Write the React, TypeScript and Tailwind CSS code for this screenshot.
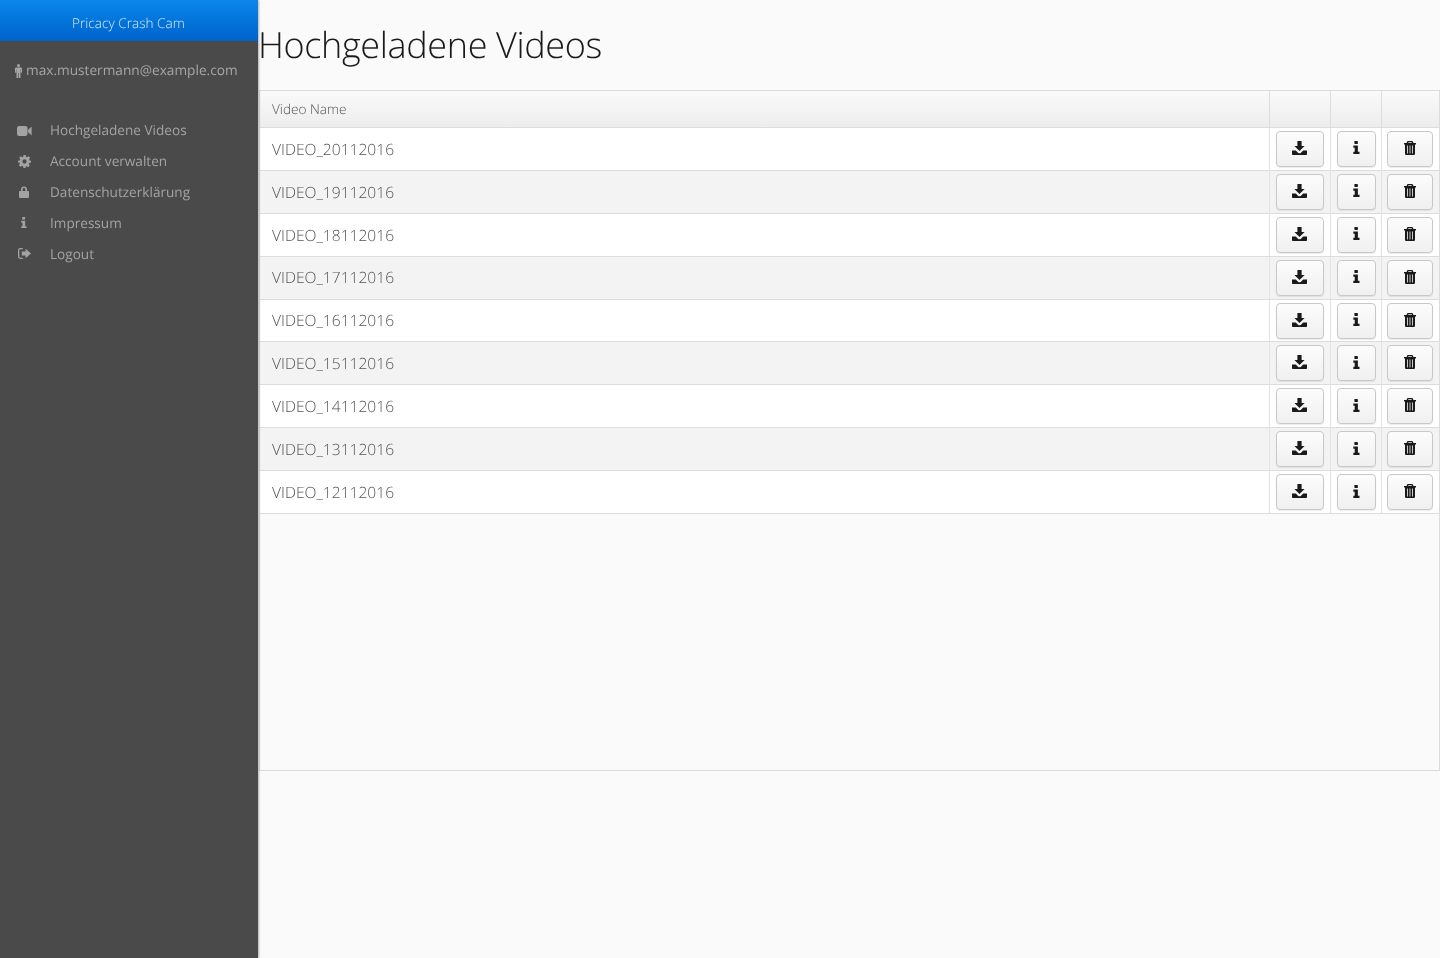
import React from "react";

const font = { fontFamily: '"Open Sans", sans-serif' };
const soft = "will-change-transform [text-rendering:geometricPrecision]";

const VideoIcon = () => (
  <svg width="15" height="12" viewBox="0 0 15 12" fill="currentColor"><rect x="0" y="1" width="10.5" height="10" rx="2.2" /><path d="M11 5 L14.6 1.6 V10.4 L11 7 Z" /></svg>
);
const GearIcon = () => (
  <svg width="13" height="13" viewBox="0 0 24 24" fill="currentColor"><path fillRule="evenodd" d="M10 0h4l.7 3.300 2 .8L19.600 2.300l2.800 2.800-1.800 2.900.8 2L24 10.700v3.300l-3.300.7-.8 2 1.800 2.900-2.800 2.800-2.900-1.800-2 .8L14 24h-4l-.7-3.300-2-.8-2.900 1.800-2.800-2.800 1.800-2.900-.8-2L0 14v-3.300l3.300-.7.8-2L2.300 5.100l2.800-2.800 2.900 1.800 2-.8zM12 8a4 4 0 100 8 4 4 0 000-8z" /></svg>
);
const LockIcon = () => (
  <svg width="10" height="12" viewBox="0 0 10 12" fill="currentColor"><path fillRule="evenodd" d="M2 5V3.400a3 3 0 016 0V5h1.200c.4 0 .8.300.8.800v5.400c0 .4-.4.800-.8.800H.8c-.4 0-.8-.4-.8-.8V5.800C0 5.300.4 5 .8 5zM3.600 5h2.800V3.400a1.400 1.400 0 00-2.800 0z" /></svg>
);
const InfoIcon = ({ size = 12 }: { size?: number }) => (
  <svg width={size * 0.5} height={size} viewBox="0 0 6 12" fill="currentColor"><rect x="1.300" y="0" width="3.200" height="2.800" rx=".4" /><path d="M.3 4.200h4.200V10H6v2H.3v-2h1.300V6.200H.3z" /></svg>
);
const LogoutIcon = () => (
  <svg width="13" height="11" viewBox="0 0 13 11" fill="currentColor"><path d="M4.800 0H2.400A2.400 2.400 0 000 2.400v6.200A2.400 2.400 0 002.400 11h2.400V9.700H2.500a1.200 1.200 0 01-1.200-1.200V2.500c0-.7.500-1.200 1.200-1.200h2.300z" /><path d="M7.600.8 13 5.500 7.600 10.200V7.400H3.800V3.600h3.800z" /></svg>
);
const MaleIcon = () => (
  <svg width="7" height="14" viewBox="0 0 7 14" fill="currentColor"><circle cx="3.500" cy="1.500" r="1.500" /><path d="M1.200 3.400h4.600c.7 0 1.200.5 1.200 1.200v3.600c0 .8-1.200.8-1.200 0V5.200h-.3V14H3.800V9h-.6v5H1.500V5.200h-.3v3c0 .8-1.200.8-1.200 0V4.600c0-.7.500-1.200 1.200-1.200z" /></svg>
);
const DownloadIcon = () => (
  <svg width="15" height="14" viewBox="0 0 15 14" fill="currentColor"><path d="M5.400 0h4.200v5h3L7.500 10 2.400 5h3z" /><path d="M0 9.600h3.800L6 11.800c.8.700 2.200.7 3 0l2.200-2.200H15v3.600c0 .4-.4.800-.8.800H.8c-.4 0-.8-.4-.8-.8z" /></svg>
);
const TrashIcon = () => (
  <svg width="12" height="14" viewBox="0 0 12 14" fill="currentColor"><path fillRule="evenodd" d="M4 0h4c.5 0 .9.300 1 .7L9.400 2H12v1.500h-1v8.900c0 .9-.6 1.600-1.400 1.600H2.400C1.600 14 1 13.300 1 12.400V3.500H0V2h2.600L3 .7c.1-.4.500-.7 1-.7zM4.400 1.200 4.100 2h3.800l-.3-.8zM3 4.500v7.900h.8V4.500zM5.600 4.500v7.900h.8V4.500zM8.200 4.500v7.900H9V4.500z" /></svg>
);

const nav = [
  { label: "Hochgeladene Videos", icon: <VideoIcon /> },
  { label: "Account verwalten", icon: <GearIcon /> },
  { label: "Datenschutzerklärung", icon: <LockIcon /> },
  { label: "Impressum", icon: <InfoIcon size={11} /> },
  { label: "Logout", icon: <LogoutIcon /> },
];

const videos = ["20", "19", "18", "17", "16", "15", "14", "13", "12"].map((d) => `VIDEO_${d}112016`);

const Btn = ({ w, children }: { w: string; children: React.ReactNode }) => (
  <button className={`${w} h-[36px] flex items-center justify-center pb-[2px] rounded-[4px] border border-[#c8c8c8] bg-gradient-to-b from-[#fcfcfc] to-[#f0f0f0] text-[#1a1a1a] shadow-[0_1px_1px_rgba(0,0,0,0.08)]`}>
    {children}
  </button>
);

export default function App() {
  return (
    <div className="flex h-[958px] w-[1440px] overflow-hidden bg-[#fafafa]" style={font}>
      <aside className="w-[258px] shrink-0 bg-[#4a4a4a] shadow-[1px_0_2px_rgba(0,0,0,0.3)] z-10">
        <div className="h-[41px] flex items-center justify-center pr-[2px] bg-gradient-to-b from-[#0b87ea] to-[#0063cc] text-[#d8eafb] text-[13.6px] font-light pt-[5px]">
          <span className={soft}>Pricacy Crash Cam</span>
        </div>
        <div className="flex items-center gap-[4px] pl-[15px] pt-[20px] text-[#a6a6a6] text-[13.68px] leading-[19px]">
          <MaleIcon />
          <span className={soft}>max.mustermann@example.com</span>
        </div>
        <nav className="mt-[41px] flex flex-col gap-[11.8px]">
          {nav.map((n) => (
            <div key={n.label} className="flex items-center h-[19px] text-[#a3a3a3] text-[13.6px]">
              <span className="w-[48px] pl-[16px] pr-[16px] flex items-center justify-center shrink-0">{n.icon}</span>
              <span className={`pl-[2px] ${soft}`}>{n.label}</span>
            </div>
          ))}
        </nav>
      </aside>
      <main className="flex-1 min-w-0 pl-px">
        <h1 className={`text-[36px] font-light text-[#1a1a1a] leading-[49px] pt-[20px] tracking-[-0.35px] -ml-px ${soft}`}>Hochgeladene Videos</h1>
        <div className="mt-[21px] h-[681px] border border-[#dcdcdc]">
          <div className="flex h-[37px] border-b border-[#dcdcdc] bg-gradient-to-b from-[#fafafa] to-[#ededed] text-[13.6px] font-light text-[#555]">
            <div className="flex-1 flex items-center pl-[12px]"><span className={soft}>Video Name</span></div>
            <div className="w-[61px] border-l border-[#dcdcdc]" />
            <div className="w-[51px] border-l border-[#dcdcdc]" />
            <div className="w-[58px] border-l border-[#dcdcdc]" />
          </div>
          {videos.map((v, i) => (
            <div key={v} className={`flex h-[42.9px] border-b border-[#dcdcdc] ${i % 2 ? "bg-[#f3f3f3]" : "bg-white"}`}>
              <div className="flex-1 flex items-center pl-[12px] pt-[1px] text-[15.6px] font-light text-[#555]"><span className={soft}>{v}</span></div>
              <div className="w-[61px] border-l border-[#e2e2e2] flex items-center pl-[6px]"><Btn w="w-[47.5px]"><DownloadIcon /></Btn></div>
              <div className="w-[51px] border-l border-[#e2e2e2] flex items-center pl-[6px]"><Btn w="w-[38.5px]"><InfoIcon size={13} /></Btn></div>
              <div className="w-[58px] border-l border-[#e2e2e2] flex items-center pl-[5px]"><Btn w="w-[46px]"><TrashIcon /></Btn></div>
            </div>
          ))}
        </div>
      </main>
    </div>
  );
}
